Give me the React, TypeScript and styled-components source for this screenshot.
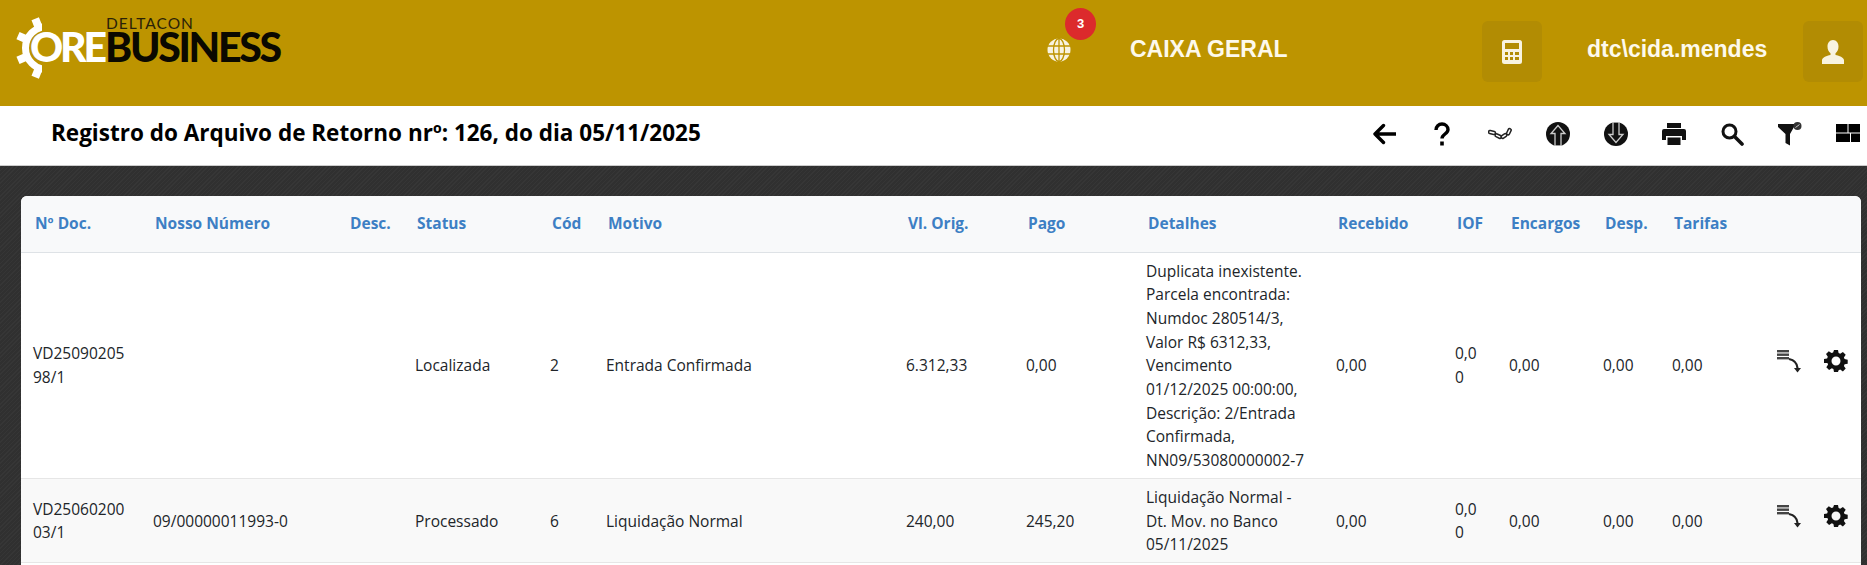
import React from "react";
import styled, { createGlobalStyle } from "styled-components";

const Global = createGlobalStyle`
  html, body { margin: 0; padding: 0; height: 565px; overflow: hidden; background: #333; }
  * { box-sizing: border-box; }
  #root { height: 565px; }
`;

const Page = styled.div`
  height: 565px;
  display: flex;
  flex-direction: column;
  overflow: hidden;
  font-family: "Open Sans", "Noto Sans", sans-serif;
`;

const TopBar = styled.header`
  height: 106px;
  flex: none;
  background: #bd9400;
  display: flex;
  align-items: flex-start;
  color: #fff;
`;

const Logo = styled.div`
  position: relative;
  width: 290px;
  height: 70px;
  margin: 16px 0 0 14px;
  flex: none;
`;

const LogoGear = styled.svg`
  position: absolute;
  left: 0;
  top: 0;
`;

const LogoSmall = styled.span`
  position: absolute;
  left: 92px;
  top: 0;
  font: 400 15.5px/15px "Lato", sans-serif;
  letter-spacing: 1px;
  color: #2a2208;
`;

const LogoBig = styled.div`
  position: absolute;
  left: 16px;
  top: 16px;
  display: flex;
  font: 900 41px/30px "Lato", sans-serif;
  white-space: nowrap;
`;

const LogoOre = styled.span`
  width: 75px;
  letter-spacing: -3.2px;
  color: #fff;
`;

const LogoBusiness = styled.span`
  letter-spacing: -2.3px;
  color: #0b0900;
`;

const TopRight = styled.div`
  margin-left: auto;
  display: flex;
  align-items: flex-start;
  padding-right: 4px;
`;

const GlobeWrap = styled.div`
  position: relative;
  width: 24px;
  height: 24px;
  margin: 38px 59px 0 0;
`;

const Badge = styled.span`
  position: absolute;
  left: 18px;
  top: -30px;
  width: 31px;
  height: 32px;
  border-radius: 50%;
  background: #dc2a2c;
  color: #fff;
  font: 700 13px/32px "Liberation Sans", sans-serif;
  text-align: center;
`;

const TopLabel = styled.span<{ $w: number; $gap?: number }>`
  width: ${(p) => p.$w}px;
  margin: 35px 0 0 ${(p) => p.$gap ?? 0}px;
  font: 700 23px/28px "Liberation Sans", sans-serif;
  color: #fdf9ec;
  white-space: nowrap;
`;

const IconBtn = styled.div`
  width: 60px;
  height: 61px;
  margin-top: 21px;
  border-radius: 6px;
  background: #b28c03;
  display: flex;
  align-items: center;
  justify-content: center;
`;

const SubBar = styled.div`
  height: 60px;
  flex: none;
  background: #fff;
  border-bottom: 1px solid #ccc;
  display: flex;
  align-items: center;
  padding: 0 7px 6px 51px;
  justify-content: space-between;
`;

const Title = styled.h1`
  margin: 0;
  font: 700 22.5px/28px "Open Sans", sans-serif;
  color: #000;
`;

const Tools = styled.div`
  display: flex;
  align-items: center;
  gap: 34px;
  margin-top: 2px;
`;

const Tool = styled.svg`
  width: 24px;
  height: 24px;
  display: block;
  flex: none;
`;

const BackTool = styled(Tool)`
  margin-left: -2px;
`;

const Body = styled.main`
  flex: 1;
  min-height: 0;
  padding: 30px 6px 0 21px;
  background-color: #333;
  background-image: repeating-linear-gradient(135deg, #363636 0 1px, #303030 1px 3px);
`;

const Card = styled.section`
  background: #fff;
  border-radius: 6px 6px 0 0;
  height: 400px;
  overflow: hidden;
`;

const Table = styled.table`
  width: 100%;
  table-layout: fixed;
  border-collapse: collapse;
  font-size: 15.5px;
  line-height: 23.7px;
  color: #212529;
`;

const Th = styled.th`
  height: 56px;
  padding: 1px 6px 0 14px;
  background: #f8f9fa;
  border-bottom: 1px solid #dee2e6;
  text-align: left;
  font-weight: 700;
  color: #3d7fc4;
  white-space: nowrap;
`;

const Tr = styled.tr<{ $alt?: boolean }>`
  background: ${(p) => (p.$alt ? "#f9f9f9" : "#fff")};
`;

const Td = styled.td`
  padding: 7px 12px 5px;
  border-bottom: 1px solid #e6e6e6;
  vertical-align: middle;
  word-break: break-all;
`;

const DetailTd = styled(Td)`
  word-break: normal;
`;

const Actions = styled.div`
  display: flex;
  align-items: center;
  gap: 23px;
  padding: 0 0 10px 5px;
`;

const Gear = () => (
  <Tool viewBox="0 0 24 24">
    <path
      fill="#111"
      fillRule="evenodd"
      d="M10 1h4l.6 3.1 1.6.7 2.7-1.8 2.8 2.8-1.8 2.700.7 1.600 3.100.6v4l-3.100.6-.7 1.600 1.800 2.700-2.800 2.800-2.700-1.800-1.600.7L14 23h-4l-.6-3.100-1.600-.7-2.700 1.800-2.800-2.800 1.800-2.700-.7-1.600L0 14v-4l3.100-.6.7-1.600L2 5.100l2.800-2.800 2.700 1.800 1.600-.7zM12 7.500a4.500 4.500 0 1 0 0 9 4.500 4.500 0 0 0 0-9z"
    />
  </Tool>
);

const RowMove = () => (
  <Tool viewBox="0 0 24 24">
    <g fill="#444">
      <rect x="0" y="1" width="12" height="2.400" />
      <rect x="0" y="4.500" width="12" height="2.400" />
      <rect x="0" y="8" width="12" height="2.400" />
    </g>
    <path d="M12 10c5 1 8 3.500 8.500 9" fill="none" stroke="#222" strokeWidth="2.200" />
    <path d="M17 19h7l-3.500 4.500z" fill="#222" />
  </Tool>
);

const cols = [120, 195, 67, 135, 56, 300, 120, 120, 190, 119, 54, 94, 69, 100, 101];
const heads = ["Nº Doc.", "Nosso Número", "Desc.", "Status", "Cód", "Motivo", "Vl. Orig.", "Pago", "Detalhes", "Recebido", "IOF", "Encargos", "Desp.", "Tarifas", ""];

const rows = [
  {
    doc: "VD2509020598/1", nn: "", status: "Localizada", cod: "2", motivo: "Entrada Confirmada", orig: "6.312,33", pago: "0,00",
    det: "Duplicata inexistente. Parcela encontrada: Numdoc 280514/3, Valor R$ 6312,33, Vencimento 01/12/2025 00:00:00, Descrição: 2/Entrada Confirmada, NN09/53080000002-7",
  },
  {
    doc: "VD2506020003/1", nn: "09/00000011993-0", status: "Processado", cod: "6", motivo: "Liquidação Normal", orig: "240,00", pago: "245,20",
    det: "Liquidação Normal - Dt. Mov. no Banco 05/11/2025",
  },
];

const teeth = [-68, -23, 23, 68];

export default function App() {
  return (
    <Page>
      <Global />
      <TopBar>
        <Logo>
          <LogoGear width="28" height="64" viewBox="14 16 28 64">
            <circle cx="47" cy="48" r="21.500" fill="none" stroke="#fff" strokeWidth="7" />
            {teeth.map((a) => (
              <rect key={a} x="15.500" y="44" width="10" height="8" fill="#fff" transform={`rotate(${a} 47 48)`} />
            ))}
          </LogoGear>
          <LogoSmall>DELTACON</LogoSmall>
          <LogoBig>
            <LogoOre>ORE</LogoOre>
            <LogoBusiness>BUSINESS</LogoBusiness>
          </LogoBig>
        </Logo>
        <TopRight>
          <GlobeWrap>
            <Tool viewBox="0 0 24 24">
              <circle cx="12" cy="12" r="11.500" fill="#f8f3e0" />
              <g fill="none" stroke="#bd9400" strokeWidth="1.300">
                <ellipse cx="12" cy="12" rx="5.500" ry="11.500" />
                <path d="M12 .5v23M1 8h22M1 16h22" />
              </g>
            </Tool>
            <Badge>3</Badge>
          </GlobeWrap>
          <TopLabel $w={352}>CAIXA GERAL</TopLabel>
          <IconBtn>
            <Tool viewBox="0 0 24 24">
              <path
                fill="#f8f3e0"
                fillRule="evenodd"
                d="M4.500 0h15A2.500 2.500 0 0 1 22 2.500v19a2.500 2.500 0 0 1-2.500 2.500h-15A2.500 2.500 0 0 1 2 21.500v-19A2.500 2.500 0 0 1 4.500 0zM5 3v6h14V3zM5 12v3h3v-3zM10 12v3h3v-3zM15 12v3h4v-3zM5 17v3h3v-3zM10 17v3h3v-3zM15 17v3h4v-3z"
              />
            </Tool>
          </IconBtn>
          <TopLabel $w={216} $gap={45}>dtc\cida.mendes</TopLabel>
          <IconBtn>
            <Tool viewBox="0 0 24 24">
              <path fill="#f8f3e0" d="M12 0c3.500 0 5.500 3 5.500 6.500 0 3-1.200 5.500-3 6.800v1.700c4 .8 8 2.500 8.500 5V24H1v-4c.5-2.500 4.500-4.200 8.500-5v-1.700c-1.800-1.300-3-3.800-3-6.800C6.500 3 8.500 0 12 0z" />
            </Tool>
          </IconBtn>
        </TopRight>
      </TopBar>

      <SubBar>
        <Title>Registro do Arquivo de Retorno nrº: 126, do dia 05/11/2025</Title>
        <Tools>
          <BackTool viewBox="0 0 24 24">
            <path d="M24 12H3M11.500 3.500L3 12l8.500 8.500" fill="none" stroke="#000" strokeWidth="3.400" strokeLinecap="round" strokeLinejoin="round" />
          </BackTool>
          <Tool viewBox="0 0 24 24">
            <path d="M6 8c0-3.500 2.600-6 6-6s6 2.500 6 5.500c0 4.500-6 4.500-6 9" fill="none" stroke="#000" strokeWidth="3.400" />
            <rect x="10.200" y="19.500" width="3.600" height="4" fill="#000" />
          </Tool>
          <Tool viewBox="0 0 24 24">
            <g fill="none" stroke="#222" strokeWidth="1.500">
              <rect x="0.500" y="9" width="7" height="3" rx="1.400" transform="rotate(15 4 10.500)" />
              <rect x="7" y="12.500" width="6.500" height="3" rx="1.400" transform="rotate(25 10 14)" />
              <rect x="13" y="12.500" width="6" height="3" rx="1.400" transform="rotate(-35 16 14)" />
              <rect x="17.500" y="8" width="6.500" height="3" rx="1.400" transform="rotate(-65 21 9.500)" />
            </g>
          </Tool>
          <Tool viewBox="0 0 24 24">
            <circle cx="12" cy="12" r="12" fill="#111" />
            <path d="M12 3.500L5 11.500h4V24h6V11.500h4z" fill="#111" stroke="#ccc" strokeWidth="1.300" />
          </Tool>
          <Tool viewBox="0 0 24 24">
            <circle cx="12" cy="12" r="12" fill="#111" />
            <path d="M12 20.500L5 12.500h4V0h6v12.500h4z" fill="#111" stroke="#ccc" strokeWidth="1.300" />
          </Tool>
          <Tool viewBox="0 0 24 24">
            <path fill="#111" fillRule="evenodd" d="M5 1h14v5H5zM2 7h20a2 2 0 0 1 2 2v9h-4v-4H4v4H0V9a2 2 0 0 1 2-2zM5.500 15.500h13V23h-13z" />
          </Tool>
          <Tool viewBox="0 0 24 24">
            <circle cx="9.500" cy="9.500" r="6.500" fill="none" stroke="#111" strokeWidth="3" />
            <path d="M14.500 14.500L22 22" stroke="#111" strokeWidth="3.600" strokeLinecap="round" />
          </Tool>
          <Tool viewBox="0 0 24 24">
            <path fill="#111" d="M0 2h16v3L12 12v11.500L7.500 21V12L0 5z" />
            <circle cx="19.500" cy="4" r="4" fill="#333" />
            <path d="M17.500 5.500L21.500 2.500" stroke="#ccc" strokeWidth="1" />
          </Tool>
          <Tool viewBox="0 0 24 24">
            <path fill="#000" d="M0 2h11.500v8.500H0zM12.500 2H24v8.500H12.500zM0 11.500h14V20H0zM15 11.500h9V20h-9z" />
          </Tool>
        </Tools>
      </SubBar>

      <Body>
        <Card>
          <Table>
            <colgroup>
              {cols.map((w, i) => (
                <col key={i} style={{ width: w }} />
              ))}
            </colgroup>
            <thead>
              <tr>
                {heads.map((h, i) => (
                  <Th key={i}>{h}</Th>
                ))}
              </tr>
            </thead>
            <tbody>
              {rows.map((r, i) => (
                <Tr key={r.doc} $alt={i === 1}>
                  <Td>{r.doc}</Td>
                  <Td>{r.nn}</Td>
                  <Td />
                  <Td>{r.status}</Td>
                  <Td>{r.cod}</Td>
                  <Td>{r.motivo}</Td>
                  <Td>{r.orig}</Td>
                  <Td>{r.pago}</Td>
                  <DetailTd>{r.det}</DetailTd>
                  <Td>0,00</Td>
                  <Td>0,00</Td>
                  <Td>0,00</Td>
                  <Td>0,00</Td>
                  <Td>0,00</Td>
                  <Td>
                    <Actions>
                      <RowMove />
                      <Gear />
                    </Actions>
                  </Td>
                </Tr>
              ))}
            </tbody>
          </Table>
        </Card>
      </Body>
    </Page>
  );
}
